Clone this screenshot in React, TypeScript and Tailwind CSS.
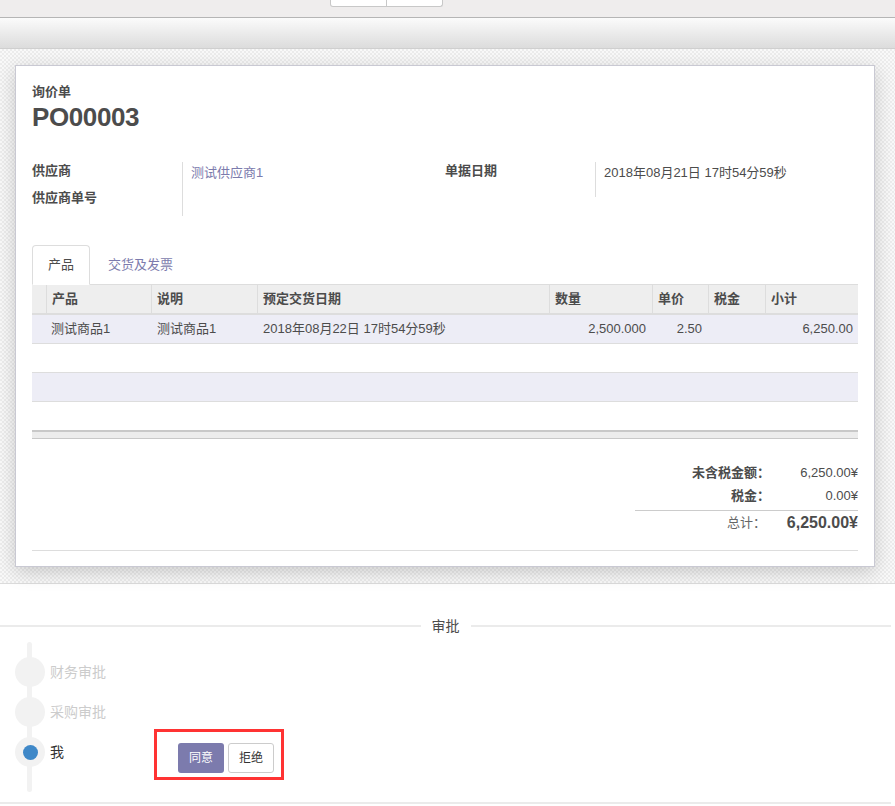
import React from 'react';

const cols = 'grid grid-cols-[14px_105px_106px_292px_103px_56px_57px_93px]';

const headers = ['产品', '说明', '预定交货日期', '数量', '单价', '税金', '小计'];

const Row = ({ shaded, children }: { shaded?: boolean; children?: React.ReactNode }) => (
  <div className={`${cols} h-[29px] border-b border-[#dddddd] items-center ${shaded ? 'bg-[#ededf6]' : 'bg-white'}`}>
    {children}
  </div>
);

const Step = ({ label, done }: { label: string; done?: boolean }) => (
  <div className="flex h-[40px] items-center">
    <div className="relative ml-[15px] flex h-[30px] w-[30px] items-center justify-center rounded-full bg-[#f2f2f2]">
      {done && <div className="h-[15px] w-[15px] rounded-full bg-[#3f88c8]" />}
    </div>
    <div className={`ml-[5px] ${done ? 'text-[#333333]' : 'text-[#cccccc]'}`}>{label}</div>
  </div>
);

export default function App() {
  return (
    <div className="min-h-screen bg-white font-['Liberation_Sans','Noto_Sans_CJK_SC',sans-serif] text-[13px] text-[#4c4c4c]">
      {/* control panel */}
      <div className="h-[18px] border-b border-[#b5b5b5] bg-[#efeded]">
        <div className="ml-[330px] flex">
          <div className="h-[7px] w-[57px] rounded-bl-[3px] border border-t-0 border-[#c8c8c8] bg-white" />
          <div className="h-[7px] w-[56px] rounded-br-[3px] border border-l-0 border-t-0 border-[#c8c8c8] bg-white" />
        </div>
      </div>
      <div className="h-[31px] border-b border-[#cfcfcf] bg-linear-to-b from-[#fbfbfb] to-[#dcdcdc]" />

      {/* form sheet */}
      <div className="border-b border-[#dcdcdc] bg-[#f4f4f4] bg-[image:repeating-conic-gradient(#ececec_0%_25%,#f9f9f9_0%_50%)] bg-[length:4px_4px] pb-[16px] pt-[16px]">
        <div className="ml-[15px] w-[860px] border border-[#c9c9d3] bg-white px-[16px] pb-[15px] pt-[16px] shadow-[0_5px_18px_rgba(0,0,0,0.18)]">
          <div className="font-bold leading-[20px]">询价单</div>
          <div className="text-[26px] font-bold leading-[30px] tracking-[-0.4px]">PO00003</div>

          <div className="mt-[30px] flex">
            <div className="w-[413px]">
              <div className="flex h-[27px]">
                <div className="w-[150px] font-bold leading-[18px]">供应商</div>
                <div className="flex-1 border-l border-[#dddddd] pl-[8px] pt-[2px] leading-[18px] text-[#7c7bad]">测试供应商1</div>
              </div>
              <div className="flex h-[27px]">
                <div className="w-[150px] font-bold leading-[18px]">供应商单号</div>
                <div className="flex-1 border-l border-[#dddddd]" />
              </div>
            </div>
            <div className="w-[413px]">
              <div className="flex h-[35px]">
                <div className="w-[150px] font-bold leading-[18px]">单据日期</div>
                <div className="flex-1 border-l border-[#dddddd] pl-[8px] pt-[2px] leading-[18px]">2018年08月21日 17时54分59秒</div>
              </div>
            </div>
          </div>

          {/* tabs */}
          <div className="mt-[29px] flex border-b border-[#dddddd]">
            <div className="-mb-px flex h-[40px] items-center rounded-t-[4px] border border-[#dddddd] border-b-white bg-white px-[15px]">产品</div>
            <div className="ml-[2px] flex h-[39px] items-center border border-transparent px-[15px] text-[#7c7bad]">交货及发票</div>
          </div>

          {/* lines */}
          <div className={`${cols} h-[30px] items-center border-b-2 border-[#dddddd] bg-[#eeeeee] font-bold`}>
            <div className="h-full" />
            {headers.map((h) => (
              <div key={h} className="flex h-full items-center border-l border-[#dddddd] pl-[5px]">{h}</div>
            ))}
          </div>
          <Row shaded>
            <div />
            <div className="pl-[5px]">测试商品1</div>
            <div className="pl-[6px]">测试商品1</div>
            <div className="pl-[6px]">2018年08月22日 17时54分59秒</div>
            <div className="pr-[6px] text-right">2,500.000</div>
            <div className="pr-[6px] text-right">2.50</div>
            <div />
            <div className="pr-[5px] text-right">6,250.00</div>
          </Row>
          <Row />
          <Row shaded />
          <div className="h-[28px] bg-white" />
          <div className="h-[9px] border-b border-t-2 border-[#c8c8c8] bg-[#ececec]" />

          {/* totals */}
          <div className="ml-auto mt-[22px] w-[223px]">
            <div className="grid h-[23px] grid-cols-[135px_88px] items-center">
              <div className="text-right font-bold">未含税金额：</div>
              <div className="text-right">6,250.00¥</div>
            </div>
            <div className="grid h-[23px] grid-cols-[135px_88px] items-center">
              <div className="text-right font-bold">税金：</div>
              <div className="text-right">0.00¥</div>
            </div>
            <div className="mt-[3px] grid h-[25px] grid-cols-[135px_88px] items-center border-t border-[#cccccc]">
              <div className="pr-[4px] text-right text-[#666666]">总计：</div>
              <div className="text-right text-[16px] font-bold">6,250.00¥</div>
            </div>
          </div>
          <div className="mt-[15px] border-t border-[#dddddd]" />
        </div>
      </div>

      {/* approval */}
      <div className="mr-[4px] mt-[32px] flex h-[20px] items-center text-[14px]">
        <div className="h-[2px] flex-1 bg-[#ebebeb]" />
        <div className="px-[11px]">审批</div>
        <div className="h-[2px] flex-1 bg-[#ebebeb]" />
      </div>
      <div className="relative mt-[6px] pb-[20px] pt-[10px] text-[14px]">
        <div className="absolute bottom-0 left-[27px] top-0 w-[5px] rounded-full bg-[#f2f2f2]" />
        <Step label="财务审批" />
        <Step label="采购审批" />
        <div className="flex h-[40px] items-center">
          <div className="relative ml-[15px] flex h-[30px] w-[30px] items-center justify-center rounded-full bg-[#f2f2f2]">
            <div className="h-[15px] w-[15px] rounded-full bg-[#3f88c8]" />
          </div>
          <div className="ml-[5px] w-[104px] text-[#333333]">我</div>
          <div className="-mt-[3px] flex self-start border-[3px] border-[#ff3333] pb-[4px] pl-[21px] pr-[7px] pt-[11px]">
            <button className="h-[30px] w-[46px] rounded-[3px] bg-[#7c7bad] text-[12px] text-white">同意</button>
            <button className="ml-[4px] h-[30px] w-[46px] rounded-[3px] border border-[#cccccc] bg-white text-[12px] text-[#333333]">拒绝</button>
          </div>
        </div>
      </div>
      <div className="mr-[4px] mt-[10px] h-[2px] bg-[#ebebeb]" />
    </div>
  );
}
